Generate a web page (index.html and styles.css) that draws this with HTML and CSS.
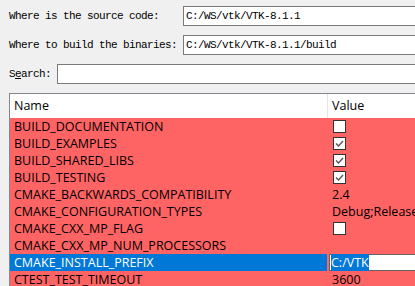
FILE: index.html
```html
<!DOCTYPE html>
<html>
	<head>
		<meta charset="UTF-8">
		<title>CMake</title>
		<link rel="stylesheet" href="styles.css">
	</head>
	<body>
		<main class="window">
			<div class="paths">
				<label class="label">Where is the source code:</label>
				<div class="field">C:/WS/vtk/VTK-8.1.1</div>

				<label class="label">Where to build the binaries:</label>
				<div class="field">C:/WS/vtk/VTK-8.1.1/build</div>
			</div>

			<div class="search">
				<label class="label">S<u>e</u>arch:</label>
				<div class="field"></div>
			</div>

			<div class="cache">
				<div class="row head">
					<div class="name">Name</div>
					<div class="value">Value</div>
				</div>
				<div class="row">
					<div class="name">BUILD_DOCUMENTATION</div>
					<div class="value"><span class="check"></span></div>
				</div>
				<div class="row">
					<div class="name">BUILD_EXAMPLES</div>
					<div class="value"><span class="check on"><svg viewBox="0 0 11 11"><path d="M2 5.5 L4.5 8 L9 3"/></svg></span></div>
				</div>
				<div class="row">
					<div class="name">BUILD_SHARED_LIBS</div>
					<div class="value"><span class="check on"><svg viewBox="0 0 11 11"><path d="M2 5.5 L4.5 8 L9 3"/></svg></span></div>
				</div>
				<div class="row">
					<div class="name">BUILD_TESTING</div>
					<div class="value"><span class="check on"><svg viewBox="0 0 11 11"><path d="M2 5.5 L4.5 8 L9 3"/></svg></span></div>
				</div>
				<div class="row">
					<div class="name">CMAKE_BACKWARDS_COMPATIBILITY</div>
					<div class="value">2.4</div>
				</div>
				<div class="row">
					<div class="name">CMAKE_CONFIGURATION_TYPES</div>
					<div class="value">Debug;Release;MinSizeRel;RelWithDebInfo</div>
				</div>
				<div class="row">
					<div class="name">CMAKE_CXX_MP_FLAG</div>
					<div class="value"><span class="check"></span></div>
				</div>
				<div class="row">
					<div class="name">CMAKE_CXX_MP_NUM_PROCESSORS</div>
					<div class="value"></div>
				</div>
				<div class="row selected">
					<div class="name">CMAKE_INSTALL_PREFIX</div>
					<div class="value"><span class="editor"><span class="sel">C:/VTK</span></span></div>
				</div>
				<div class="row">
					<div class="name">CTEST_TEST_TIMEOUT</div>
					<div class="value">3600</div>
				</div>
			</div>
		</main>
	</body>
</html>
```

FILE: styles.css
```css
body {
    margin: 0; padding: 0;
    background: #f0f0f0;
    overflow: hidden;
}

.window {
    width: 480px;
    padding: 6px 0 0 9px;
    display: flex; flex-direction: column;
    gap: 9px;
}

.label, .field {
    font: 11px "Liberation Mono", monospace;
    letter-spacing: -0.6px;
    color: #000;
}

.paths {
    display: grid;
    grid-template-columns: 174px 1fr;
    row-gap: 9px;
    align-items: center;
}

.search {
    display: grid;
    grid-template-columns: 48px 1fr;
    align-items: center;
}

.field {
    height: 20px;
    box-sizing: border-box;
    border: 1px solid #7a7a7a;
    background: #fff;
    padding: 0 2px;
    line-height: 18px;
    white-space: nowrap;
}

.cache {
    border: 1px solid #828790;
    border-right: none;
    background: #fff;
    font: 12.5px "Open Sans", "Noto Sans", sans-serif;
    color: #000;
}

.row {
    display: grid;
    grid-template-columns: 317px 1fr;
    height: 17px;
    line-height: 17px;
    background: #ff6464;
    white-space: nowrap;
}

.row.head {
    height: 24px;
    line-height: 24px;
    background: #fff;
}

.row.head .value {
    border-left: 1px solid #e5e5e5;
    padding-left: 4px;
}

.name {
    padding-left: 4px;
    overflow: hidden;
}

.value {
    padding-left: 5px;
    display: flex; align-items: center;
    overflow: hidden;
}

.row.selected .name {
    background: #0078d7;
    color: #fff;
}

.check {
    width: 13px; height: 13px;
    box-sizing: border-box;
    border: 1px solid #333;
    background: #fff;
    margin-left: 1px;
    display: flex;
}

.check svg {
    width: 11px; height: 11px;
    fill: none;
    stroke: #555;
    stroke-width: 1.4;
}

.editor {
    margin-left: -3px;
    height: 17px;
    width: 100px;
    box-sizing: border-box;
    border: 1px solid #646464;
    border-right: none;
    background: #fff;
    line-height: 15px;
    padding-left: 1px;
}

.sel {
    background: #0078d7;
    color: #fff;
}
```
